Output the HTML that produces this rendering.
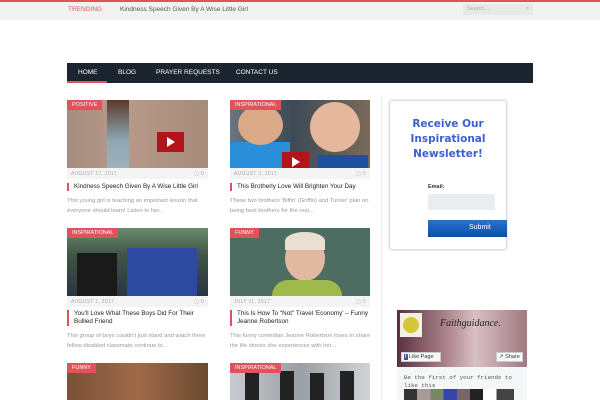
<!DOCTYPE html>
<html><head><meta charset="utf-8"><style>
*{margin:0;padding:0;box-sizing:border-box}
body{width:600px;height:400px;overflow:hidden;background:#fff;font-family:"Liberation Sans",sans-serif;position:relative}
.a{position:absolute}
.top{left:0;top:0;width:600px;height:20px;background:#f2f2f2;border-top:2px solid #e0535b}
.cat{position:absolute;left:0;top:0;background:#e0535b;color:#fff;font-size:5.5px;padding:2px 5px;text-transform:uppercase}
.img{position:absolute;overflow:hidden}
.meta{position:absolute;height:11px;background:#f4f4f4;font-size:5px;color:#aaa;padding:3px 4px;letter-spacing:.3px}
.meta span{float:right}
.t{position:absolute;font-size:6.3px;color:#222;border-left:2px solid #e0535b;padding-left:5px;line-height:8px}
.ex{position:absolute;font-size:5.8px;color:#999;line-height:10px}
.play{position:absolute;width:27px;height:20px;background:#b3141b}
.play:after{content:"";position:absolute;left:10px;top:5px;border-left:8px solid #fff;border-top:5px solid transparent;border-bottom:5px solid transparent}
</style></head><body>
<div class="a top"></div>
<div class="a" style="left:68px;top:6px;font-size:6.5px;color:#e0535b">TRENDING</div>
<div class="a" style="left:120px;top:6px;font-size:6.5px;color:#555">Kindness Speech Given By A Wise Little Girl</div>
<div class="a" style="left:463px;top:4px;width:70px;height:11px;background:#e8e8e8;font-size:5.5px;color:#aaa;padding:2px 4px">Search...<span style="float:right">⌕</span></div>
<div class="a" style="left:67px;top:63px;width:466px;height:20px;background:#1c252f"></div>
<div class="a" style="left:67px;top:81px;width:40px;height:2px;background:#e0535b"></div>
<div class="a" style="left:78px;top:69px;font-size:6.5px;color:#fff;word-spacing:1px">HOME</div>
<div class="a" style="left:118px;top:69px;font-size:6.5px;color:#fff">BLOG</div>
<div class="a" style="left:156px;top:69px;font-size:6.5px;color:#fff">PRAYER REQUESTS</div>
<div class="a" style="left:236px;top:69px;font-size:6.5px;color:#fff">CONTACT US</div>
<div class="a" style="left:381px;top:95px;width:1px;height:305px;background:#eee"></div>

<!-- row1 -->
<div class="img" style="left:67px;top:100px;width:141px;height:68px;background:linear-gradient(90deg,#a48c7e,#b89a8a 40%,#a68b7a)">
<div class="a" style="left:40px;top:0;width:22px;height:68px;background:linear-gradient(#5a3b2a,#8fa7b4 60%,#9fb0bb)"></div>
<div class="play" style="left:90px;top:32px"></div><div class="cat">Positive</div></div>
<div class="meta" style="left:67px;top:168px;width:141px">AUGUST 17, 2017<span>▢ 0</span></div>
<div class="t" style="left:67px;top:183px">Kindness Speech Given By A Wise Little Girl</div>
<div class="ex" style="left:67px;top:196px;width:145px">This young girl is teaching an important lesson that everyone should learn! Listen to her...</div>

<div class="img" style="left:230px;top:100px;width:140px;height:68px;background:linear-gradient(90deg,#6a7580,#3d4a55 45%,#7a6a5a)">
<div class="a" style="left:0;top:42px;width:60px;height:26px;background:#2a8ed8"></div>
<div class="a" style="left:8px;top:5px;width:45px;height:40px;border-radius:50%;background:#dba888"></div>
<div class="a" style="left:80px;top:2px;width:50px;height:50px;border-radius:50%;background:#e6b79d"></div>
<div class="a" style="left:88px;top:55px;width:50px;height:13px;background:#1f4fa0"></div>
<div class="play" style="left:52px;top:52px"></div><div class="cat">Inspirational</div></div>
<div class="meta" style="left:230px;top:168px;width:140px">AUGUST 3, 2017<span>▢ 0</span></div>
<div class="t" style="left:230px;top:183px">This Brotherly Love Will Brighten Your Day</div>
<div class="ex" style="left:230px;top:196px;width:145px">These two brothers 'Biffin' (Griffin) and Turner' plan on being best brothers for the rest...</div>

<!-- row2 -->
<div class="img" style="left:67px;top:228px;width:141px;height:68px;background:linear-gradient(#6a8a70,#405545 40%,#2a3540)">
<div class="a" style="left:60px;top:20px;width:70px;height:48px;background:#2c4aa0"></div>
<div class="a" style="left:10px;top:25px;width:40px;height:43px;background:#1a1a1a"></div>
<div class="cat">Inspirational</div></div>
<div class="meta" style="left:67px;top:296px;width:141px">AUGUST 1, 2017<span>▢ 0</span></div>
<div class="t" style="left:67px;top:310px;width:141px">You'll Love What These Boys Did For Their Bullied Friend</div>
<div class="ex" style="left:67px;top:331px;width:145px">This group of boys couldn't just stand and watch there fellow disabled classmate continue to...</div>

<div class="img" style="left:230px;top:228px;width:140px;height:68px;background:#4d6d62">
<div class="a" style="left:55px;top:8px;width:40px;height:45px;border-radius:50%;background:#e0b9a0"></div>
<div class="a" style="left:55px;top:4px;width:40px;height:18px;border-radius:50% 50% 0 0;background:#e9e0d2"></div>
<div class="a" style="left:42px;top:52px;width:70px;height:16px;background:#a0b94c;border-radius:20px 20px 0 0"></div>
<div class="cat">Funny</div></div>
<div class="meta" style="left:230px;top:296px;width:140px">JULY 11, 2017<span>▢ 0</span></div>
<div class="t" style="left:230px;top:310px;width:140px">This Is How To "Not" Travel 'Economy' – Funny Jeanne Robertson</div>
<div class="ex" style="left:230px;top:331px;width:145px">This funny comedian Jeanne Robertson loves to share the life stories she experiences with her...</div>

<!-- row3 -->
<div class="img" style="left:67px;top:363px;width:141px;height:37px;background:linear-gradient(90deg,#7a5038,#a06a48,#6a4a30)"><div class="cat">Funny</div></div>
<div class="img" style="left:230px;top:363px;width:140px;height:37px;background:linear-gradient(90deg,#c8ccd0,#9a9fa5,#d0d4d8)">
<div class="a" style="left:15px;top:10px;width:14px;height:27px;background:#222"></div><div class="a" style="left:50px;top:8px;width:14px;height:29px;background:#222"></div><div class="a" style="left:80px;top:10px;width:14px;height:27px;background:#222"></div><div class="a" style="left:110px;top:8px;width:14px;height:29px;background:#222"></div>
<div class="cat">Inspirational</div></div>

<!-- newsletter -->
<div class="a" style="left:389px;top:100px;width:118px;height:150px;border:1px solid #ddd;border-radius:3px;box-shadow:0 0 2px #ccc"></div>
<div class="a" style="left:389px;top:117px;width:118px;text-align:center;font-family:'DejaVu Sans',sans-serif;font-weight:bold;font-size:10.5px;line-height:15px;color:#3b5fd0">Receive Our<br>Inspirational<br>Newsletter!</div>
<div class="a" style="left:428px;top:184px;font-size:5.5px;font-weight:bold;color:#333">Email:</div>
<div class="a" style="left:428px;top:194px;width:67px;height:16px;background:#e8edf0"></div>
<div class="a" style="left:428px;top:220px;width:79px;height:17px;background:linear-gradient(#2a72c8,#0d4ea8);color:#fff;font-size:7px;padding:4px 0 0 41px">Submit</div>

<!-- fb -->
<div class="a" style="left:397px;top:310px;width:130px;height:90px;background:#f5f6f7"></div>
<div class="a" style="left:397px;top:310px;width:130px;height:57px;background:linear-gradient(90deg,#5a3040,#b08890 40%,#d8c0c4 60%,#a07880)"></div>
<div class="a" style="left:400px;top:313px;width:22px;height:24px;background:#f2f0e0"><div class="a" style="left:3px;top:4px;width:16px;height:16px;border-radius:50%;background:#d4c83a"></div></div>
<div class="a" style="left:440px;top:318px;font-family:'Liberation Serif',serif;font-style:italic;font-size:10px;color:#222">Faithguidance.</div>
<div class="a" style="left:401px;top:352px;width:40px;height:10px;background:#f6f7f9;border:1px solid #ccc;font-size:5.5px;color:#333;padding:1px 2px"><span style="background:#3b5998;color:#fff;padding:0 1px">f</span> Like Page</div>
<div class="a" style="left:496px;top:352px;width:27px;height:10px;background:#f6f7f9;border:1px solid #ccc;font-size:5.5px;color:#333;padding:1px 2px">↗ Share</div>
<div class="a" style="left:404px;top:374px;width:120px;font-family:'Liberation Mono',monospace;font-size:5.8px;line-height:8px;color:#555">Be the first of your friends to like this</div>
<div class="a" style="left:404px;top:389px;width:110px;height:11px;background:linear-gradient(90deg,#333 0 12%,#a99 12% 24%,#786 24% 36%,#34a 36% 48%,#766 48% 60%,#222 60% 72%,#fff 72% 84%,#444 84%)"></div>
</body></html>
